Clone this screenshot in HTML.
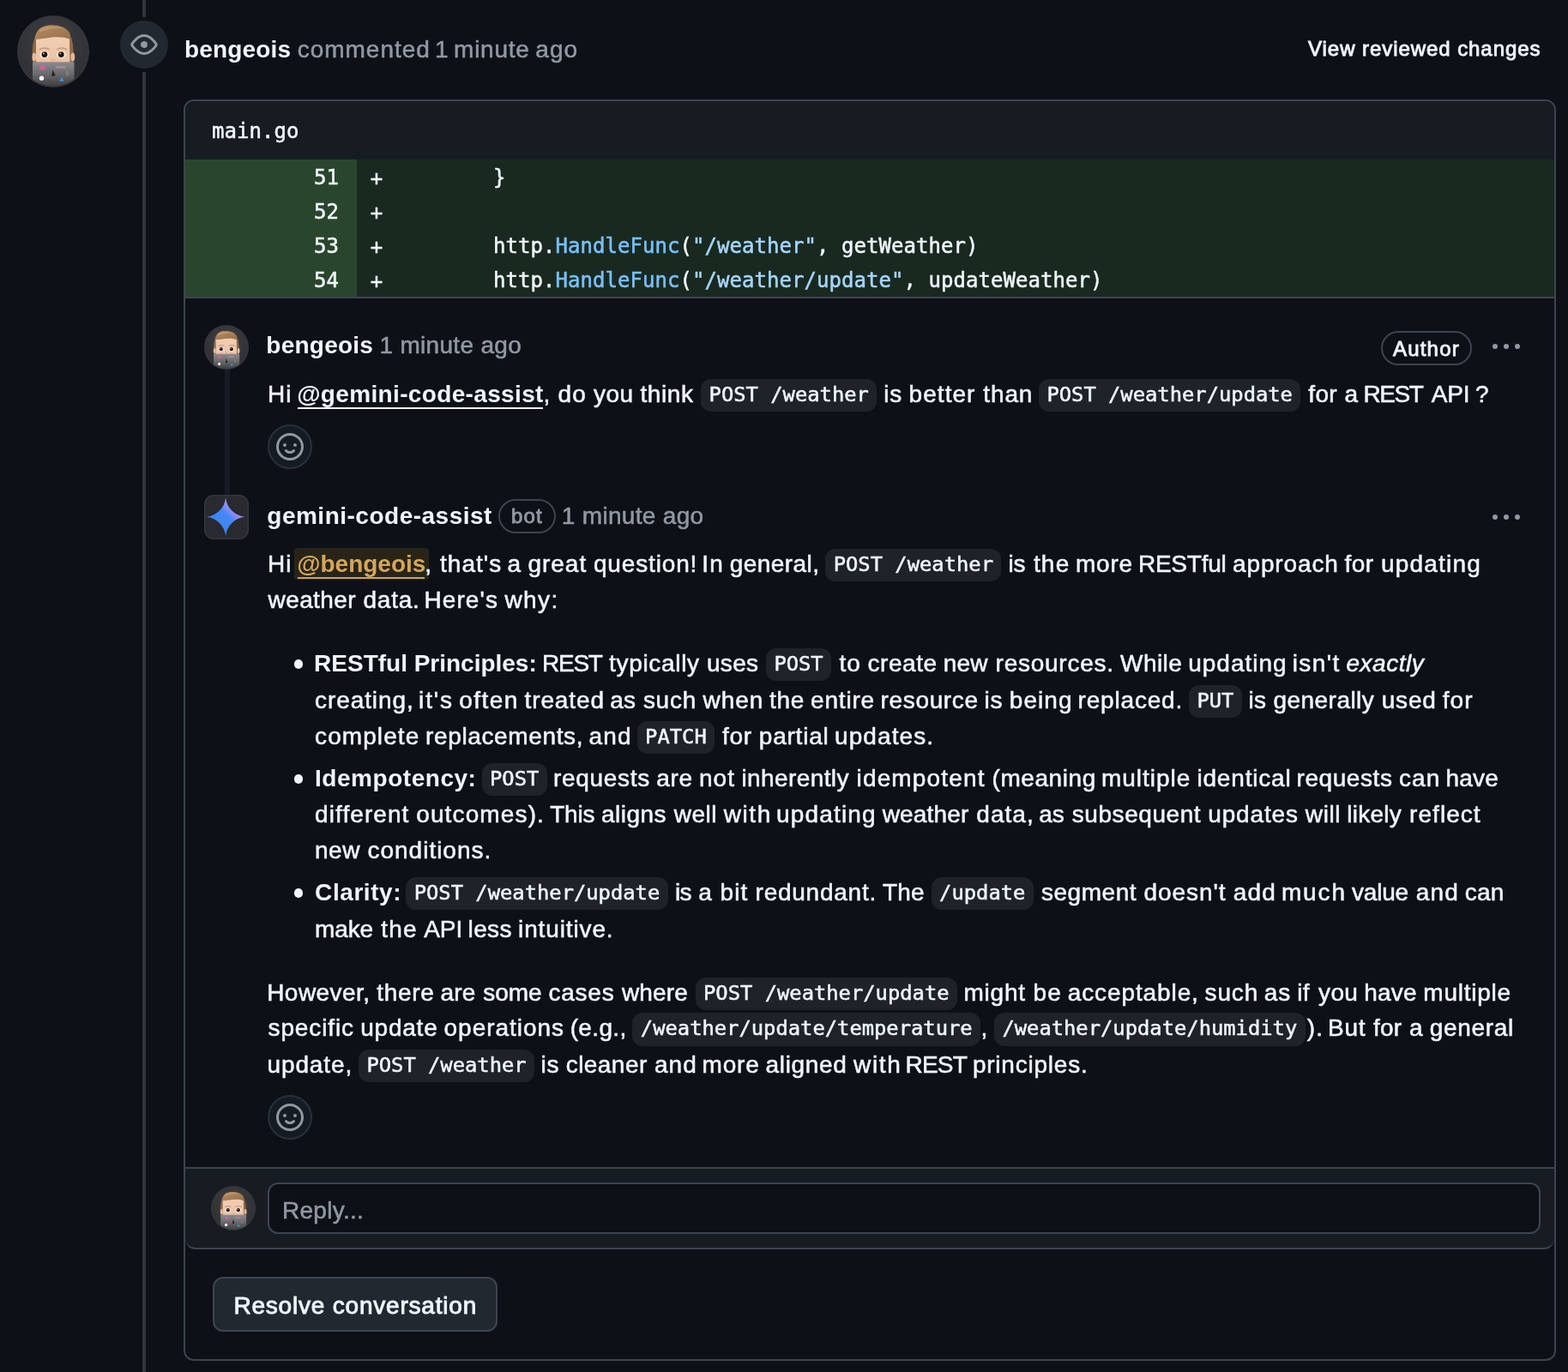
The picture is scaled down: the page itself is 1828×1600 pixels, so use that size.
<!DOCTYPE html>
<html lang="en"><head><meta charset="utf-8"><title>Review thread</title><style>
*{box-sizing:border-box;margin:0;padding:0}
html,body{width:1828px;height:1600px;overflow:hidden;background:#0d1117;}
body{position:relative;font-family:"Liberation Sans", Arial, sans-serif;color:#f0f6fc;font-size:28px;line-height:42px;-webkit-font-smoothing:antialiased}
#root{position:absolute;left:0;top:0;width:1828px;height:1600px;will-change:transform}
.abs{position:absolute}
.mut{color:#9198a1}
code{-webkit-text-stroke:0.5px currentColor;position:absolute;font-family:"DejaVu Sans Mono", "Liberation Mono", monospace;font-size:23.8px;letter-spacing:0;background:rgba(101,108,118,0.2);border-radius:12px;height:38.5px;line-height:37px;text-align:center;white-space:pre}
.tk{position:absolute;white-space:pre;height:42px;line-height:42px;font-size:28px;-webkit-text-stroke:0.55px currentColor}
.tk.b{-webkit-text-stroke:0}
.tk.md{-webkit-text-stroke:0.9px currentColor}
.b{font-weight:700} .it{font-style:italic}
.menbg{position:absolute;height:36.5px;background:#282418;border-radius:4px}
.ul{position:absolute;height:2px}
.tk.men{color:#d4a65a}
.pill{position:absolute;border:2px solid #3d444d;border-radius:40px;height:40px}
.mono{-webkit-text-stroke:0.5px currentColor;font-family:"DejaVu Sans Mono", "Liberation Mono", monospace;font-size:24px;letter-spacing:0.05px;white-space:pre}
.row{position:absolute;left:216px;width:1596px;height:40px;background:#192920}
.row .num{position:absolute;left:0;top:0;padding-top:1px;width:200px;height:40px;background:#29462d;text-align:right;padding-right:21px;line-height:40px}
.row .mk{position:absolute;left:215.7px;top:1px;line-height:42px}
.row .cd{position:absolute;left:358.9px;top:1px;line-height:40px}
.k1{color:#79c0ff} .s1{color:#a5d6ff}
.emo{position:absolute;width:52px;height:52px;border-radius:50%;border:2px solid #2a3038;background:#151b23}
.emo svg{position:absolute;left:8px;top:8px}
.bul{position:absolute;width:10.8px;height:10.8px;border-radius:50%;background:#f0f6fc}
</style></head><body><div id="root">
<div class="abs" style="left:166px;top:0;width:4px;height:1600px;background:#2f353d"></div>
<svg class="abs" style="left:20px;top:18px" width="84" height="84" viewBox="0 0 84 84">
<defs><clipPath id="cpa"><circle cx="42" cy="42" r="40.300"/></clipPath>
<linearGradient id="lga" x1="0" y1="0" x2="0" y2="1"><stop offset="0" stop-color="#8b8b8e"/><stop offset="0.45" stop-color="#69696c"/><stop offset="1" stop-color="#333336"/></linearGradient>
<linearGradient id="hga" x1="0" y1="0" x2="1" y2="1"><stop offset="0" stop-color="#b58d62"/><stop offset="1" stop-color="#96704a"/></linearGradient>
<linearGradient id="ska" x1="0" y1="0" x2="0" y2="1"><stop offset="0" stop-color="#f3cfb3"/><stop offset="1" stop-color="#e9c0a4"/></linearGradient>
<radialGradient id="bga" cx="0.5" cy="0.35" r="0.7"><stop offset="0" stop-color="#3e3f42"/><stop offset="1" stop-color="#2d2e32"/></radialGradient></defs>
<circle cx="42" cy="42" r="42" fill="#33373c"/>
<g clip-path="url(#cpa)">
<rect width="84" height="84" fill="url(#bga)"/>
<path d="M18.500 56 C17 44 17.500 32 21 25 L25 22 L60 22 L63.500 27 C66 36 66 46 65 56 Z" fill="#8c6a46"/>
<ellipse cx="19.800" cy="48.500" rx="2.400" ry="5" fill="#e3b79b"/><ellipse cx="64.800" cy="48.500" rx="2.400" ry="5" fill="#e3b79b"/>
<path d="M22 27 C30 23 52 22 61 27 L61.500 58 L22 58 Z" fill="url(#ska)"/>
<path d="M20.500 28 C21 19 27 12.500 36 11.500 C46 10.200 57 13 61 20 C62.500 23 62.500 26 62 28 C54 24.500 43 25 34 26.500 C28 27.400 24 27.800 20.500 28 Z" fill="url(#hga)"/>
<path d="M25 17 C31 12 45 11.500 55 15.500 C47 14.500 35 15 27 20 Z" fill="#c49c70" opacity="0.7"/>
<path d="M26.500 39.500 Q31.500 37 37 39.300" stroke="#c79f80" stroke-width="1.800" fill="none" stroke-linecap="round"/><path d="M47 39.300 Q52.500 37 57.500 39.500" stroke="#c79f80" stroke-width="1.800" fill="none" stroke-linecap="round"/>
<ellipse cx="31.700" cy="45.800" rx="5.300" ry="4.300" fill="#fbeee2"/><ellipse cx="51.400" cy="45.800" rx="5.300" ry="4.300" fill="#fbeee2"/>
<circle cx="31.900" cy="45.600" r="3.400" fill="#20130c"/><circle cx="51.300" cy="45.600" r="3.400" fill="#20130c"/>
<circle cx="30.900" cy="44.400" r="0.900" fill="#fff" opacity="0.8"/><circle cx="50.300" cy="44.400" r="0.900" fill="#fff" opacity="0.8"/>
<ellipse cx="41.700" cy="52" rx="3" ry="1.600" fill="#e2b295" opacity="0.8"/>
<rect x="18" y="54.300" width="48.500" height="32" fill="url(#lga)"/>
<ellipse cx="29.800" cy="60.800" rx="3.200" ry="2.700" fill="#d45f9c"/><rect x="45" y="59" width="11.500" height="2.400" rx="1.200" fill="#a98a9c"/>
<path d="M41.500 63.500 l3.200 6.600 l-4.600 1.200 z" fill="#252527"/><circle cx="28.500" cy="73.300" r="2.700" fill="#f4f4f4"/><path d="M52 71.800 l2.800 5 h-5.600 z" fill="#3f8fe0"/><ellipse cx="58.400" cy="67.600" rx="1.700" ry="3" fill="#7d7d80"/>
</g></svg>
<div class="abs" style="left:136px;top:20px;width:64px;height:64px;border-radius:50%;background:#0d1117"></div>
<div class="abs" style="left:140px;top:24px;width:56px;height:56px;border-radius:50%;background:#212830"></div>
<svg class="abs" style="left:152px;top:36px" width="32" height="32" viewBox="0 0 16 16" fill="#9198a1"><path d="M8 2c1.981 0 3.671.992 4.933 2.078 1.270 1.091 2.187 2.345 2.637 3.023a1.620 1.620 0 0 1 0 1.798c-.450.678-1.367 1.932-2.637 3.023C11.670 13.008 9.981 14 8 14c-1.981 0-3.671-.992-4.933-2.078C1.797 10.830.880 9.576.430 8.898a1.620 1.620 0 0 1 0-1.798c.450-.677 1.367-1.931 2.637-3.022C4.330 2.992 6.019 2 8 2ZM1.679 7.932a.120.120 0 0 0 0 .136c.411.622 1.241 1.750 2.366 2.717C5.176 11.758 6.527 12.500 8 12.500c1.473 0 2.825-.742 3.955-1.715 1.124-.967 1.954-2.096 2.366-2.717a.120.120 0 0 0 0-.136c-.412-.621-1.242-1.750-2.366-2.717C10.824 4.242 9.473 3.500 8 3.500c-1.473 0-2.825.742-3.955 1.715-1.124.967-1.954 2.096-2.366 2.717ZM8 10a2 2 0 1 1-.001-3.999A2 2 0 0 1 8 10Z"/></svg>
<div class="abs" style="left:214px;top:116px;width:1600px;height:1471px;border:2px solid #3d444d;border-radius:12px"></div>
<div class="abs" style="left:216px;top:118px;width:1596px;height:68px;background:#171c23;border-radius:10px 10px 0 0"></div>
<div class="abs mono" style="left:247px;top:133px;line-height:40px">main.go</div>
<div class="row mono" style="top:186px"><div class="num">51</div><div class="mk">+</div><div class="cd">}</div></div>
<div class="row mono" style="top:226px"><div class="num">52</div><div class="mk">+</div><div class="cd"></div></div>
<div class="row mono" style="top:266px"><div class="num">53</div><div class="mk">+</div><div class="cd">http.<span class="k1">HandleFunc</span>(<span class="s1">"/weather"</span>, getWeather)</div></div>
<div class="row mono" style="top:306px"><div class="num">54</div><div class="mk">+</div><div class="cd">http.<span class="k1">HandleFunc</span>(<span class="s1">"/weather/update"</span>, updateWeather)</div></div>
<div class="abs" style="left:216px;top:346px;width:1596px;height:2px;background:#3d444d"></div>
<div class="abs" style="left:262px;top:430px;width:6px;height:148px;background:#181b24"></div>
<svg class="abs" style="left:238px;top:379px" width="52" height="52" viewBox="0 0 84 84">
<defs><clipPath id="cpb"><circle cx="42" cy="42" r="40.300"/></clipPath>
<linearGradient id="lgb" x1="0" y1="0" x2="0" y2="1"><stop offset="0" stop-color="#8b8b8e"/><stop offset="0.45" stop-color="#69696c"/><stop offset="1" stop-color="#333336"/></linearGradient>
<linearGradient id="hgb" x1="0" y1="0" x2="1" y2="1"><stop offset="0" stop-color="#b58d62"/><stop offset="1" stop-color="#96704a"/></linearGradient>
<linearGradient id="skb" x1="0" y1="0" x2="0" y2="1"><stop offset="0" stop-color="#f3cfb3"/><stop offset="1" stop-color="#e9c0a4"/></linearGradient>
<radialGradient id="bgb" cx="0.5" cy="0.35" r="0.7"><stop offset="0" stop-color="#3e3f42"/><stop offset="1" stop-color="#2d2e32"/></radialGradient></defs>
<circle cx="42" cy="42" r="42" fill="#33373c"/>
<g clip-path="url(#cpb)">
<rect width="84" height="84" fill="url(#bgb)"/>
<path d="M18.500 56 C17 44 17.500 32 21 25 L25 22 L60 22 L63.500 27 C66 36 66 46 65 56 Z" fill="#8c6a46"/>
<ellipse cx="19.800" cy="48.500" rx="2.400" ry="5" fill="#e3b79b"/><ellipse cx="64.800" cy="48.500" rx="2.400" ry="5" fill="#e3b79b"/>
<path d="M22 27 C30 23 52 22 61 27 L61.500 58 L22 58 Z" fill="url(#skb)"/>
<path d="M20.500 28 C21 19 27 12.500 36 11.500 C46 10.200 57 13 61 20 C62.500 23 62.500 26 62 28 C54 24.500 43 25 34 26.500 C28 27.400 24 27.800 20.500 28 Z" fill="url(#hgb)"/>
<path d="M25 17 C31 12 45 11.500 55 15.500 C47 14.500 35 15 27 20 Z" fill="#c49c70" opacity="0.7"/>
<path d="M26.500 39.500 Q31.500 37 37 39.300" stroke="#c79f80" stroke-width="1.800" fill="none" stroke-linecap="round"/><path d="M47 39.300 Q52.500 37 57.500 39.500" stroke="#c79f80" stroke-width="1.800" fill="none" stroke-linecap="round"/>
<ellipse cx="31.700" cy="45.800" rx="5.300" ry="4.300" fill="#fbeee2"/><ellipse cx="51.400" cy="45.800" rx="5.300" ry="4.300" fill="#fbeee2"/>
<circle cx="31.900" cy="45.600" r="3.400" fill="#20130c"/><circle cx="51.300" cy="45.600" r="3.400" fill="#20130c"/>
<circle cx="30.900" cy="44.400" r="0.900" fill="#fff" opacity="0.8"/><circle cx="50.300" cy="44.400" r="0.900" fill="#fff" opacity="0.8"/>
<ellipse cx="41.700" cy="52" rx="3" ry="1.600" fill="#e2b295" opacity="0.8"/>
<rect x="18" y="54.300" width="48.500" height="32" fill="url(#lgb)"/>
<ellipse cx="29.800" cy="60.800" rx="3.200" ry="2.700" fill="#d45f9c"/><rect x="45" y="59" width="11.500" height="2.400" rx="1.200" fill="#a98a9c"/>
<path d="M41.500 63.500 l3.200 6.600 l-4.600 1.200 z" fill="#252527"/><circle cx="28.500" cy="73.300" r="2.700" fill="#f4f4f4"/><path d="M52 71.800 l2.800 5 h-5.600 z" fill="#3f8fe0"/><ellipse cx="58.400" cy="67.600" rx="1.700" ry="3" fill="#7d7d80"/>
</g></svg>
<div class="pill" style="left:1610px;top:386px;width:106px"></div>
<svg class="abs" style="left:1740px;top:389px" width="32" height="32" viewBox="0 0 16 16" fill="#9198a1"><path d="M8 9a1.500 1.500 0 1 0 0-3 1.500 1.500 0 0 0 0 3ZM1.500 9a1.500 1.500 0 1 0 0-3 1.500 1.500 0 0 0 0 3Zm13 0a1.500 1.500 0 1 0 0-3 1.500 1.500 0 0 0 0 3Z"/></svg>
<div class="emo" style="left:312px;top:495px"><svg width="32" height="32" viewBox="0 0 16 16" fill="#9198a1"><path d="M8 0a8 8 0 1 1 0 16A8 8 0 0 1 8 0ZM1.500 8a6.500 6.500 0 1 0 13 0 6.500 6.500 0 0 0-13 0Zm3.820 1.636a.750.750 0 0 1 1.038.175l.007.009c.103.118.220.222.350.310.264.178.683.370 1.285.370.602 0 1.020-.192 1.285-.371.130-.088.247-.192.350-.310l.007-.008a.750.750 0 0 1 1.222.870l-.022.030c-.182.248-.422.447-.668.616-.470.318-1.158.673-2.174.673-1.016 0-1.702-.355-2.174-.673a2.700 2.700 0 0 1-.668-.616l-.022-.030a.750.750 0 0 1 .184-1.045ZM12 7a1 1 0 1 1-2 0 1 1 0 0 1 2 0ZM5 8a1 1 0 1 1 0-2 1 1 0 0 1 0 2Z"/></svg></div>
<svg class="abs" style="left:238px;top:577px" width="52" height="52" viewBox="0 0 52 52"><defs><linearGradient id="gg" x1="0.15" y1="0.85" x2="0.85" y2="0.15"><stop offset="0" stop-color="#3b82f6"/><stop offset="0.55" stop-color="#4388f7"/><stop offset="0.75" stop-color="#9a8cf6"/><stop offset="1" stop-color="#d9c8f8"/></linearGradient></defs>
<rect x="0" y="0" width="52" height="52" rx="11" fill="#33373e"/><rect x="1.500" y="1.500" width="49" height="49" rx="9.500" fill="#282a2e"/>
<path d="M47.40 25.80 A25.15 25.15 0 0 0 25.10 48.10 A25.15 25.15 0 0 0 2.80 25.80 A25.15 25.15 0 0 0 25.10 3.50 A25.15 25.15 0 0 0 47.40 25.80 Z" fill="url(#gg)"/></svg>
<div class="pill" style="left:581px;top:582px;width:67px"></div>
<svg class="abs" style="left:1740px;top:588px" width="32" height="32" viewBox="0 0 16 16" fill="#9198a1"><path d="M8 9a1.500 1.500 0 1 0 0-3 1.500 1.500 0 0 0 0 3ZM1.500 9a1.500 1.500 0 1 0 0-3 1.500 1.500 0 0 0 0 3Zm13 0a1.500 1.500 0 1 0 0-3 1.500 1.500 0 0 0 0 3Z"/></svg>
<div class="bul" style="left:342.6px;top:769.1px"></div>
<div class="bul" style="left:342.6px;top:903.1px"></div>
<div class="bul" style="left:342.6px;top:1036.1px"></div>
<div class="emo" style="left:312px;top:1277px"><svg width="32" height="32" viewBox="0 0 16 16" fill="#9198a1"><path d="M8 0a8 8 0 1 1 0 16A8 8 0 0 1 8 0ZM1.500 8a6.500 6.500 0 1 0 13 0 6.500 6.500 0 0 0-13 0Zm3.820 1.636a.750.750 0 0 1 1.038.175l.007.009c.103.118.220.222.350.310.264.178.683.370 1.285.370.602 0 1.020-.192 1.285-.371.130-.088.247-.192.350-.310l.007-.008a.750.750 0 0 1 1.222.870l-.022.030c-.182.248-.422.447-.668.616-.470.318-1.158.673-2.174.673-1.016 0-1.702-.355-2.174-.673a2.700 2.700 0 0 1-.668-.616l-.022-.030a.750.750 0 0 1 .184-1.045ZM12 7a1 1 0 1 1-2 0 1 1 0 0 1 2 0ZM5 8a1 1 0 1 1 0-2 1 1 0 0 1 0 2Z"/></svg></div>
<div class="abs" style="left:216px;top:1361px;width:1596px;height:96px;background:#171c23;border-top:2px solid #3d444d;border-bottom:2px solid #3d444d;border-radius:0 0 12px 12px"></div>
<svg class="abs" style="left:246px;top:1383px" width="52" height="52" viewBox="0 0 84 84">
<defs><clipPath id="cpc"><circle cx="42" cy="42" r="40.300"/></clipPath>
<linearGradient id="lgc" x1="0" y1="0" x2="0" y2="1"><stop offset="0" stop-color="#8b8b8e"/><stop offset="0.45" stop-color="#69696c"/><stop offset="1" stop-color="#333336"/></linearGradient>
<linearGradient id="hgc" x1="0" y1="0" x2="1" y2="1"><stop offset="0" stop-color="#b58d62"/><stop offset="1" stop-color="#96704a"/></linearGradient>
<linearGradient id="skc" x1="0" y1="0" x2="0" y2="1"><stop offset="0" stop-color="#f3cfb3"/><stop offset="1" stop-color="#e9c0a4"/></linearGradient>
<radialGradient id="bgc" cx="0.5" cy="0.35" r="0.7"><stop offset="0" stop-color="#3e3f42"/><stop offset="1" stop-color="#2d2e32"/></radialGradient></defs>
<circle cx="42" cy="42" r="42" fill="#33373c"/>
<g clip-path="url(#cpc)">
<rect width="84" height="84" fill="url(#bgc)"/>
<path d="M18.500 56 C17 44 17.500 32 21 25 L25 22 L60 22 L63.500 27 C66 36 66 46 65 56 Z" fill="#8c6a46"/>
<ellipse cx="19.800" cy="48.500" rx="2.400" ry="5" fill="#e3b79b"/><ellipse cx="64.800" cy="48.500" rx="2.400" ry="5" fill="#e3b79b"/>
<path d="M22 27 C30 23 52 22 61 27 L61.500 58 L22 58 Z" fill="url(#skc)"/>
<path d="M20.500 28 C21 19 27 12.500 36 11.500 C46 10.200 57 13 61 20 C62.500 23 62.500 26 62 28 C54 24.500 43 25 34 26.500 C28 27.400 24 27.800 20.500 28 Z" fill="url(#hgc)"/>
<path d="M25 17 C31 12 45 11.500 55 15.500 C47 14.500 35 15 27 20 Z" fill="#c49c70" opacity="0.7"/>
<path d="M26.500 39.500 Q31.500 37 37 39.300" stroke="#c79f80" stroke-width="1.800" fill="none" stroke-linecap="round"/><path d="M47 39.300 Q52.500 37 57.500 39.500" stroke="#c79f80" stroke-width="1.800" fill="none" stroke-linecap="round"/>
<ellipse cx="31.700" cy="45.800" rx="5.300" ry="4.300" fill="#fbeee2"/><ellipse cx="51.400" cy="45.800" rx="5.300" ry="4.300" fill="#fbeee2"/>
<circle cx="31.900" cy="45.600" r="3.400" fill="#20130c"/><circle cx="51.300" cy="45.600" r="3.400" fill="#20130c"/>
<circle cx="30.900" cy="44.400" r="0.900" fill="#fff" opacity="0.8"/><circle cx="50.300" cy="44.400" r="0.900" fill="#fff" opacity="0.8"/>
<ellipse cx="41.700" cy="52" rx="3" ry="1.600" fill="#e2b295" opacity="0.8"/>
<rect x="18" y="54.300" width="48.500" height="32" fill="url(#lgc)"/>
<ellipse cx="29.800" cy="60.800" rx="3.200" ry="2.700" fill="#d45f9c"/><rect x="45" y="59" width="11.500" height="2.400" rx="1.200" fill="#a98a9c"/>
<path d="M41.500 63.500 l3.200 6.600 l-4.600 1.200 z" fill="#252527"/><circle cx="28.500" cy="73.300" r="2.700" fill="#f4f4f4"/><path d="M52 71.800 l2.800 5 h-5.600 z" fill="#3f8fe0"/><ellipse cx="58.400" cy="67.600" rx="1.700" ry="3" fill="#7d7d80"/>
</g></svg>
<div class="abs" style="left:312px;top:1379px;width:1484px;height:60px;border:2px solid #3d444d;border-radius:12px;background:#0d1117"></div>
<div class="abs" style="left:248px;top:1489px;width:332px;height:64px;border:2px solid #3d444d;border-radius:12px;background:#212830"></div>
<div class="tl"><span class="tk b" style="left:215.0px;top:37.0px;letter-spacing:0.157px;">bengeois</span> <span class="tk mut" style="left:346.7px;top:37.0px;letter-spacing:0.988px;">commented</span> <span class="tk mut" style="left:507.1px;top:37.0px;letter-spacing:0.000px;">1</span> <span class="tk mut" style="left:529.1px;top:37.0px;letter-spacing:0.740px;">minute</span> <span class="tk mut" style="left:624.3px;top:37.0px;letter-spacing:1.050px;">ago</span></div>
<div class="tl"><span class="tk md" style="left:1525.1px;top:36.0px;letter-spacing:0.935px;font-size:24px;">View reviewed changes</span></div>
<div class="tl"><span class="tk b" style="left:310.3px;top:381.6px;letter-spacing:0.243px;">bengeois</span> <span class="tk mut" style="left:442.4px;top:381.6px;letter-spacing:0.318px;">1 minute ago</span></div>
<div class="tl"><span class="tk md" style="left:1624.0px;top:385.8px;letter-spacing:1.200px;font-size:24px;">Author</span></div>
<div class="tl"><span class="tk " style="left:311.9px;top:438.5px;letter-spacing:1.200px;">Hi</span> <span class="ul" style="left:347.2px;top:474.5px;width:286.3px;background:#f0f6fc"></span><span class="tk b lnk" style="left:346.2px;top:438.5px;letter-spacing:0.350px;">@gemini-code-assist</span> <span class="tk " style="left:633.6px;top:438.5px;letter-spacing:0.000px;">,</span> <span class="tk " style="left:650.6px;top:438.5px;letter-spacing:1.200px;">do</span> <span class="tk " style="left:692.0px;top:438.5px;letter-spacing:0.450px;">you</span> <span class="tk " style="left:746.4px;top:438.5px;letter-spacing:0.600px;">think</span> <code style="left:817.1px;top:441.5px;width:205.3px">POST /weather</code> <span class="tk " style="left:1030.3px;top:438.5px;letter-spacing:0.800px;">is</span> <span class="tk " style="left:1059.6px;top:438.5px;letter-spacing:1.040px;">better</span> <span class="tk " style="left:1146.3px;top:438.5px;letter-spacing:0.867px;">than</span> <code style="left:1210.9px;top:441.5px;width:305.6px">POST /weather/update</code> <span class="tk " style="left:1525.3px;top:438.5px;letter-spacing:0.300px;">for</span> <span class="tk " style="left:1567.4px;top:438.5px;letter-spacing:0.000px;">a</span> <span class="tk " style="left:1589.4px;top:438.5px;letter-spacing:-1.400px;">REST</span> <span class="tk " style="left:1668.7px;top:438.5px;letter-spacing:-0.100px;">API</span> <span class="tk " style="left:1720.0px;top:438.5px;letter-spacing:0.000px;">?</span></div>
<div class="tl"><span class="tk b" style="left:311.3px;top:581.0px;letter-spacing:0.500px;">gemini-code-assist</span> <span class="tk mut" style="left:654.8px;top:581.0px;letter-spacing:0.318px;">1 minute ago</span></div>
<div class="tl"><span class="tk md mut" style="left:596.0px;top:581.0px;letter-spacing:1.200px;font-size:24px;">bot</span></div>
<div class="tl"><span class="tk " style="left:311.9px;top:636.5px;letter-spacing:1.200px;">Hi</span> <span class="menbg" style="left:343.0px;top:639.0px;width:156.8px"></span><span class="ul" style="left:347.2px;top:672.5px;width:148.0px;background:#cfa35c"></span><span class="tk b men" style="left:346.2px;top:636.5px;letter-spacing:0.000px;">@bengeois</span> <span class="tk " style="left:495.3px;top:636.5px;letter-spacing:0.000px;">,</span> <span class="tk " style="left:513.1px;top:636.5px;letter-spacing:1.000px;">that&#x27;s</span> <span class="tk " style="left:591.6px;top:636.5px;letter-spacing:0.000px;">a</span> <span class="tk " style="left:615.4px;top:636.5px;letter-spacing:1.000px;">great</span> <span class="tk " style="left:691.9px;top:636.5px;letter-spacing:0.850px;">question!</span> <span class="tk " style="left:818.2px;top:636.5px;letter-spacing:1.200px;">In</span> <span class="tk " style="left:850.7px;top:636.5px;letter-spacing:0.443px;">general,</span> <code style="left:962.2px;top:639.5px;width:205.3px">POST /weather</code> <span class="tk " style="left:1175.4px;top:636.5px;letter-spacing:-0.100px;">is</span> <span class="tk " style="left:1204.9px;top:636.5px;letter-spacing:1.200px;">the</span> <span class="tk " style="left:1253.9px;top:636.5px;letter-spacing:0.833px;">more</span> <span class="tk " style="left:1326.9px;top:636.5px;letter-spacing:-0.233px;">RESTful</span> <span class="tk " style="left:1437.0px;top:636.5px;letter-spacing:0.871px;">approach</span> <span class="tk " style="left:1567.6px;top:636.5px;letter-spacing:0.450px;">for</span> <span class="tk " style="left:1610.0px;top:636.5px;letter-spacing:1.186px;">updating</span></div>
<div class="tl"><span class="tk " style="left:312.5px;top:678.5px;letter-spacing:0.417px;">weather</span> <span class="tk " style="left:423.5px;top:678.5px;letter-spacing:0.775px;">data.</span> <span class="tk " style="left:494.4px;top:678.5px;letter-spacing:1.100px;">Here&#x27;s</span> <span class="tk " style="left:588.4px;top:678.5px;letter-spacing:1.433px;">why:</span></div>
<div class="tl"><span class="tk b" style="left:366.1px;top:752.7px;letter-spacing:-0.011px;">RESTful Principles:</span> <span class="tk " style="left:632.1px;top:752.7px;letter-spacing:-1.300px;">REST</span> <span class="tk " style="left:710.1px;top:752.7px;letter-spacing:0.675px;">typically</span> <span class="tk " style="left:824.0px;top:752.7px;letter-spacing:0.300px;">uses</span> <code style="left:892.9px;top:755.7px;width:76.3px">POST</code> <span class="tk " style="left:978.4px;top:752.7px;letter-spacing:1.200px;">to</span> <span class="tk " style="left:1011.5px;top:752.7px;letter-spacing:0.560px;">create</span> <span class="tk " style="left:1099.8px;top:752.7px;letter-spacing:0.150px;">new</span> <span class="tk " style="left:1160.6px;top:752.7px;letter-spacing:0.744px;">resources.</span> <span class="tk " style="left:1306.1px;top:752.7px;letter-spacing:0.400px;">While</span> <span class="tk " style="left:1385.2px;top:752.7px;letter-spacing:1.000px;">updating</span> <span class="tk " style="left:1506.7px;top:752.7px;letter-spacing:1.400px;">isn&#x27;t</span> <span class="tk it" style="left:1569.5px;top:752.7px;letter-spacing:0.517px;">exactly</span></div>
<div class="tl"><span class="tk " style="left:367.1px;top:795.6px;letter-spacing:0.900px;">creating,</span> <span class="tk " style="left:488.1px;top:795.6px;letter-spacing:1.867px;">it&#x27;s</span> <span class="tk " style="left:535.2px;top:795.6px;letter-spacing:1.475px;">often</span> <span class="tk " style="left:611.6px;top:795.6px;letter-spacing:0.867px;">treated</span> <span class="tk " style="left:711.3px;top:795.6px;letter-spacing:0.100px;">as</span> <span class="tk " style="left:749.9px;top:795.6px;letter-spacing:0.733px;">such</span> <span class="tk " style="left:819.6px;top:795.6px;letter-spacing:0.967px;">when</span> <span class="tk " style="left:897.0px;top:795.6px;letter-spacing:0.750px;">the</span> <span class="tk " style="left:945.0px;top:795.6px;letter-spacing:0.820px;">entire</span> <span class="tk " style="left:1026.6px;top:795.6px;letter-spacing:0.643px;">resource</span> <span class="tk " style="left:1147.6px;top:795.6px;letter-spacing:0.700px;">is</span> <span class="tk " style="left:1176.8px;top:795.6px;letter-spacing:1.050px;">being</span> <span class="tk " style="left:1256.5px;top:795.6px;letter-spacing:0.825px;">replaced.</span> <code style="left:1385.9px;top:798.6px;width:62.0px">PUT</code> <span class="tk " style="left:1455.4px;top:795.6px;letter-spacing:0.500px;">is</span> <span class="tk " style="left:1484.4px;top:795.6px;letter-spacing:0.475px;">generally</span> <span class="tk " style="left:1610.7px;top:795.6px;letter-spacing:0.833px;">used</span> <span class="tk " style="left:1681.7px;top:795.6px;letter-spacing:1.050px;">for</span></div>
<div class="tl"><span class="tk " style="left:367.1px;top:837.6px;letter-spacing:1.071px;">complete</span> <span class="tk " style="left:496.1px;top:837.6px;letter-spacing:0.625px;">replacements,</span> <span class="tk " style="left:686.4px;top:837.6px;letter-spacing:1.200px;">and</span> <code style="left:742.6px;top:840.6px;width:90.7px">PATCH</code> <span class="tk " style="left:842.1px;top:837.6px;letter-spacing:0.600px;">for</span> <span class="tk " style="left:884.8px;top:837.6px;letter-spacing:0.783px;">partial</span> <span class="tk " style="left:973.0px;top:837.6px;letter-spacing:1.100px;">updates.</span></div>
<div class="tl"><span class="tk b" style="left:367.0px;top:886.6px;letter-spacing:0.536px;">Idempotency:</span> <code style="left:561.5px;top:889.6px;width:76.3px">POST</code> <span class="tk " style="left:645.1px;top:886.6px;letter-spacing:0.671px;">requests</span> <span class="tk " style="left:765.3px;top:886.6px;letter-spacing:0.650px;">are</span> <span class="tk " style="left:815.1px;top:886.6px;letter-spacing:0.950px;">not</span> <span class="tk " style="left:864.5px;top:886.6px;letter-spacing:0.389px;">inherently</span> <span class="tk " style="left:998.5px;top:886.6px;letter-spacing:1.167px;">idempotent</span> <span class="tk " style="left:1156.5px;top:886.6px;letter-spacing:0.571px;">(meaning</span> <span class="tk " style="left:1284.0px;top:886.6px;letter-spacing:0.986px;">multiple</span> <span class="tk " style="left:1395.4px;top:886.6px;letter-spacing:0.825px;">identical</span> <span class="tk " style="left:1511.5px;top:886.6px;letter-spacing:0.571px;">requests</span> <span class="tk " style="left:1631.0px;top:886.6px;letter-spacing:1.050px;">can</span> <span class="tk " style="left:1685.6px;top:886.6px;letter-spacing:0.133px;">have</span></div>
<div class="tl"><span class="tk " style="left:367.1px;top:928.5px;letter-spacing:1.075px;">different</span> <span class="tk " style="left:485.2px;top:928.5px;letter-spacing:1.133px;">outcomes).</span> <span class="tk " style="left:641.2px;top:928.5px;letter-spacing:-0.233px;">This</span> <span class="tk " style="left:701.0px;top:928.5px;letter-spacing:0.460px;">aligns</span> <span class="tk " style="left:785.8px;top:928.5px;letter-spacing:0.467px;">well</span> <span class="tk " style="left:843.7px;top:928.5px;letter-spacing:1.600px;">with</span> <span class="tk " style="left:905.0px;top:928.5px;letter-spacing:1.171px;">updating</span> <span class="tk " style="left:1028.7px;top:928.5px;letter-spacing:0.183px;">weather</span> <span class="tk " style="left:1138.3px;top:928.5px;letter-spacing:1.025px;">data,</span> <span class="tk " style="left:1211.2px;top:928.5px;letter-spacing:0.100px;">as</span> <span class="tk " style="left:1249.8px;top:928.5px;letter-spacing:0.556px;">subsequent</span> <span class="tk " style="left:1408.3px;top:928.5px;letter-spacing:0.833px;">updates</span> <span class="tk " style="left:1521.8px;top:928.5px;letter-spacing:0.633px;">will</span> <span class="tk " style="left:1570.2px;top:928.5px;letter-spacing:0.280px;">likely</span> <span class="tk " style="left:1643.1px;top:928.5px;letter-spacing:1.050px;">reflect</span></div>
<div class="tl"><span class="tk " style="left:367.1px;top:970.8px;letter-spacing:0.450px;">new</span> <span class="tk " style="left:428.5px;top:970.8px;letter-spacing:0.990px;">conditions.</span></div>
<div class="tl"><span class="tk b" style="left:367.1px;top:1019.9px;letter-spacing:0.571px;">Clarity:</span> <code style="left:473.2px;top:1022.9px;width:305.6px">POST /weather/update</code> <span class="tk " style="left:787.1px;top:1019.9px;letter-spacing:-0.856px;">is</span> <span class="tk " style="left:814.3px;top:1019.9px;letter-spacing:0.000px;">a</span> <span class="tk " style="left:839.4px;top:1019.9px;letter-spacing:1.200px;">bit</span> <span class="tk " style="left:880.6px;top:1019.9px;letter-spacing:0.744px;">redundant.</span> <span class="tk " style="left:1029.1px;top:1019.9px;letter-spacing:0.100px;">The</span> <code style="left:1085.6px;top:1022.9px;width:119.3px">/update</code> <span class="tk " style="left:1214.0px;top:1019.9px;letter-spacing:0.517px;">segment</span> <span class="tk " style="left:1333.6px;top:1019.9px;letter-spacing:0.900px;">doesn&#x27;t</span> <span class="tk " style="left:1437.8px;top:1019.9px;letter-spacing:1.200px;">add</span> <span class="tk " style="left:1493.9px;top:1019.9px;letter-spacing:1.900px;">much</span> <span class="tk " style="left:1576.1px;top:1019.9px;letter-spacing:-0.225px;">value</span> <span class="tk " style="left:1650.8px;top:1019.9px;letter-spacing:1.200px;">and</span> <span class="tk " style="left:1707.7px;top:1019.9px;letter-spacing:0.300px;">can</span></div>
<div class="tl"><span class="tk " style="left:367.1px;top:1063.0px;letter-spacing:-0.133px;">make</span> <span class="tk " style="left:444.3px;top:1063.0px;letter-spacing:1.200px;">the</span> <span class="tk " style="left:494.3px;top:1063.0px;letter-spacing:-0.100px;">API</span> <span class="tk " style="left:545.6px;top:1063.0px;letter-spacing:0.333px;">less</span> <span class="tk " style="left:604.1px;top:1063.0px;letter-spacing:0.867px;">intuitive.</span></div>
<div class="tl"><span class="tk " style="left:311.2px;top:1136.9px;letter-spacing:0.457px;">However,</span> <span class="tk " style="left:439.2px;top:1136.9px;letter-spacing:0.675px;">there</span> <span class="tk " style="left:513.4px;top:1136.9px;letter-spacing:0.200px;">are</span> <span class="tk " style="left:563.3px;top:1136.9px;letter-spacing:-0.067px;">some</span> <span class="tk " style="left:639.6px;top:1136.9px;letter-spacing:0.725px;">cases</span> <span class="tk " style="left:725.0px;top:1136.9px;letter-spacing:0.125px;">where</span> <code style="left:810.5px;top:1139.9px;width:305.6px">POST /weather/update</code> <span class="tk " style="left:1123.5px;top:1136.9px;letter-spacing:0.775px;">might</span> <span class="tk " style="left:1204.5px;top:1136.9px;letter-spacing:1.200px;">be</span> <span class="tk " style="left:1244.7px;top:1136.9px;letter-spacing:0.900px;">acceptable,</span> <span class="tk " style="left:1404.5px;top:1136.9px;letter-spacing:0.900px;">such</span> <span class="tk " style="left:1473.7px;top:1136.9px;letter-spacing:1.000px;">as</span> <span class="tk " style="left:1512.2px;top:1136.9px;letter-spacing:0.300px;">if</span> <span class="tk " style="left:1537.0px;top:1136.9px;letter-spacing:0.400px;">you</span> <span class="tk " style="left:1590.3px;top:1136.9px;letter-spacing:0.167px;">have</span> <span class="tk " style="left:1659.3px;top:1136.9px;letter-spacing:0.757px;">multiple</span></div>
<div class="tl"><span class="tk " style="left:312.5px;top:1178.3px;letter-spacing:0.886px;">specific</span> <span class="tk " style="left:420.2px;top:1178.3px;letter-spacing:0.780px;">update</span> <span class="tk " style="left:517.6px;top:1178.3px;letter-spacing:0.956px;">operations</span> <span class="tk " style="left:664.7px;top:1178.3px;letter-spacing:0.340px;">(e.g.,</span> <code style="left:737.3px;top:1181.3px;width:405.9px">/weather/update/temperature</code> <span class="tk " style="left:1143.4px;top:1178.3px;letter-spacing:0.000px;">,</span> <code style="left:1158.9px;top:1181.3px;width:362.9px">/weather/update/humidity</code> <span class="tk " style="left:1523.8px;top:1178.3px;letter-spacing:1.200px;">).</span> <span class="tk " style="left:1548.0px;top:1178.3px;letter-spacing:0.750px;">But</span> <span class="tk " style="left:1601.0px;top:1178.3px;letter-spacing:0.250px;">for</span> <span class="tk " style="left:1643.0px;top:1178.3px;letter-spacing:0.000px;">a</span> <span class="tk " style="left:1666.8px;top:1178.3px;letter-spacing:0.650px;">general</span></div>
<div class="tl"><span class="tk " style="left:311.5px;top:1220.6px;letter-spacing:0.883px;">update,</span> <code style="left:417.9px;top:1223.6px;width:205.3px">POST /weather</code> <span class="tk " style="left:630.4px;top:1220.6px;letter-spacing:0.800px;">is</span> <span class="tk " style="left:659.7px;top:1220.6px;letter-spacing:0.450px;">cleaner</span> <span class="tk " style="left:762.9px;top:1220.6px;letter-spacing:1.050px;">and</span> <span class="tk " style="left:818.5px;top:1220.6px;letter-spacing:0.833px;">more</span> <span class="tk " style="left:892.5px;top:1220.6px;letter-spacing:0.667px;">aligned</span> <span class="tk " style="left:995.0px;top:1220.6px;letter-spacing:1.700px;">with</span> <span class="tk " style="left:1055.6px;top:1220.6px;letter-spacing:-0.820px;">REST</span> <span class="tk " style="left:1133.9px;top:1220.6px;letter-spacing:0.780px;">principles.</span></div>
<div class="tl"><span class="tk mut" style="left:328.9px;top:1390.5px;letter-spacing:0.300px;">Reply...</span></div>
<div class="tl"><span class="tk md" style="left:272.4px;top:1502.0px;letter-spacing:0.800px;">Resolve conversation</span></div>
</div></body></html>
